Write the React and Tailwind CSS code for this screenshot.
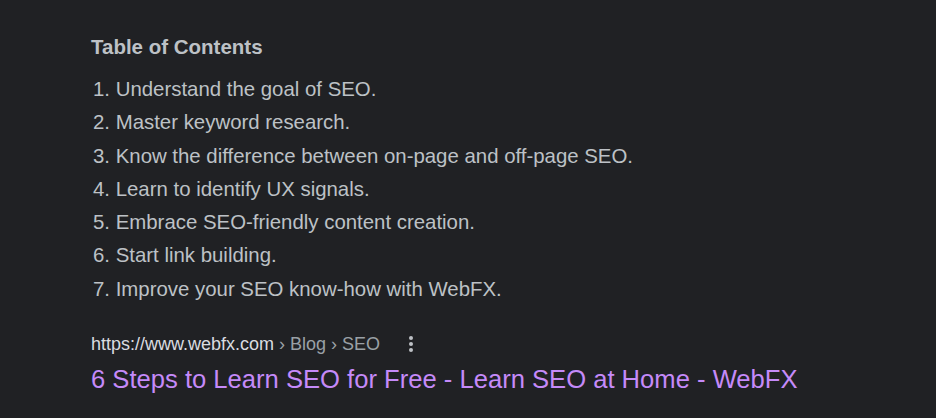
const items = [
  'Understand the goal of SEO.',
  'Master keyword research.',
  'Know the difference between on-page and off-page SEO.',
  'Learn to identify UX signals.',
  'Embrace SEO-friendly content creation.',
  'Start link building.',
  'Improve your SEO know-how with WebFX.',
];

export default function App() {
  return (
    <div className="min-h-[418px] w-[936px] bg-[#202124] font-['Liberation_Sans',Arial,sans-serif] text-[#bdc1c6]">
      <div className="pl-[91px] pt-[33px]">
        <h2 className="text-[20.5px] font-bold leading-[28px] text-[#bdc1c6]">Table of Contents</h2>
        <ol className="mt-[12px] pl-[2px] text-[20.4px] leading-[33.3px]">
          {items.map((item, i) => (
            <li key={i}>
              {i + 1}. {item}
            </li>
          ))}
        </ol>
        <div className="mt-[26px] flex items-center text-[18px] leading-[24px]">
          <span className="text-[#dadce0]">https://www.webfx.com</span>
          <span className="text-[#9aa0a6]">&nbsp;› Blog › SEO</span>
          <svg className="ml-[29px]" width="4" height="16" viewBox="0 0 4 16" fill="#bdc1c6">
            <circle cx="2" cy="2" r="2" />
            <circle cx="2" cy="8" r="2" />
            <circle cx="2" cy="14" r="2" />
          </svg>
        </div>
        <a href="#" className="mt-[7px] block text-[25.6px] leading-[32px] text-[#c58af9]">
          6 Steps to Learn SEO for Free - Learn SEO at Home - WebFX
        </a>
      </div>
    </div>
  );
}
